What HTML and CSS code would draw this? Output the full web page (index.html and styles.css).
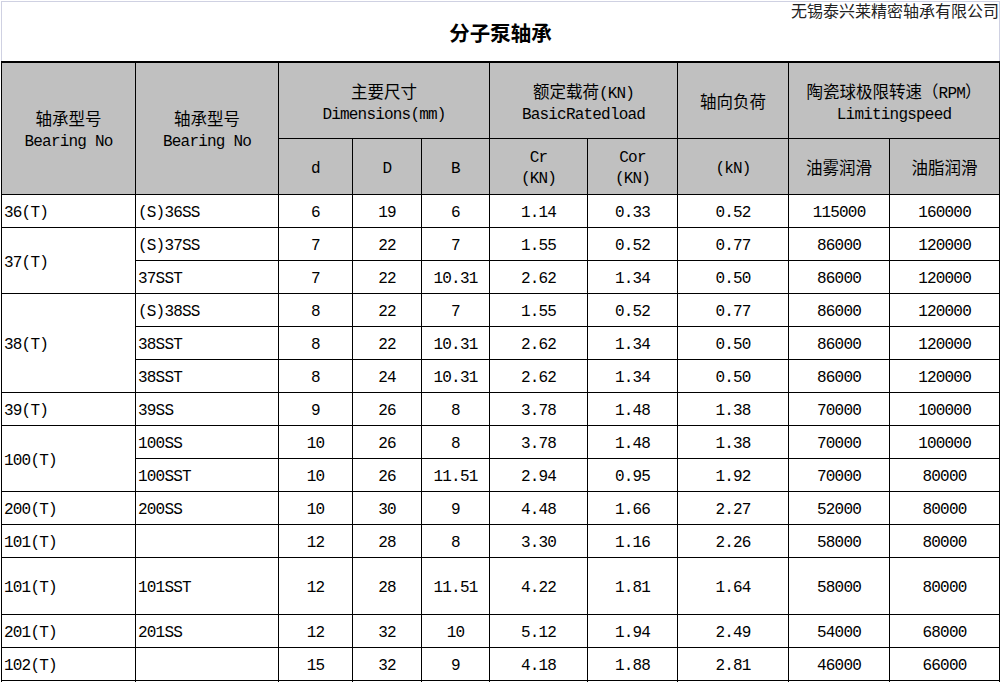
FILE: index.html
```html
<!DOCTYPE html>
<html lang="zh-CN">
<head>
<meta charset="utf-8">
<title>分子泵轴承</title>
<link rel="stylesheet" href="styles.css">
</head>
<body>
<div class="sheet">
  <div class="top">
    <div class="company">无锡泰兴莱精密轴承有限公司</div>
    <h1 class="title">分子泵轴承</h1>
  </div>
  <table class="grid">
    <colgroup>
      <col class="c1"><col class="c2"><col class="c3"><col class="c4"><col class="c5">
      <col class="c6"><col class="c7"><col class="c8"><col class="c9"><col class="c10">
    </colgroup>
    <thead>
      <tr class="h1">
        <th class="span2" rowspan="2"><span class="zh">轴承型号</span><br>Bearing No</th>
        <th class="span2" rowspan="2"><span class="zh">轴承型号</span><br>Bearing No</th>
        <th colspan="3"><span class="zh">主要尺寸</span><br>Dimensions(mm)</th>
        <th colspan="2"><span class="zh">额定载荷</span>(KN)<br>BasicRatedload</th>
        <th><span class="zh">轴向负荷</span></th>
        <th colspan="2"><span class="zh">陶瓷球极限转速（</span>RPM<span class="zh">）</span><br>Limitingspeed</th>
      </tr>
      <tr class="h2">
        <th>d</th>
        <th>D</th>
        <th>B</th>
        <th>Cr<br>(KN)</th>
        <th>Cor<br>(KN)</th>
        <th>(kN)</th>
        <th><span class="zh">油雾润滑</span></th>
        <th><span class="zh">油脂润滑</span></th>
      </tr>
    </thead>
    <tbody>
      <tr><td class="l">36(T)</td><td class="l">(S)36SS</td><td>6</td><td>19</td><td>6</td><td>1.14</td><td>0.33</td><td>0.52</td><td>115000</td><td>160000</td></tr>
      <tr><td class="l" rowspan="2">37(T)</td><td class="l">(S)37SS</td><td>7</td><td>22</td><td>7</td><td>1.55</td><td>0.52</td><td>0.77</td><td>86000</td><td>120000</td></tr>
      <tr><td class="l">37SST</td><td>7</td><td>22</td><td>10.31</td><td>2.62</td><td>1.34</td><td>0.50</td><td>86000</td><td>120000</td></tr>
      <tr><td class="l" rowspan="3">38(T)</td><td class="l">(S)38SS</td><td>8</td><td>22</td><td>7</td><td>1.55</td><td>0.52</td><td>0.77</td><td>86000</td><td>120000</td></tr>
      <tr><td class="l">38SST</td><td>8</td><td>22</td><td>10.31</td><td>2.62</td><td>1.34</td><td>0.50</td><td>86000</td><td>120000</td></tr>
      <tr><td class="l">38SST</td><td>8</td><td>24</td><td>10.31</td><td>2.62</td><td>1.34</td><td>0.50</td><td>86000</td><td>120000</td></tr>
      <tr><td class="l">39(T)</td><td class="l">39SS</td><td>9</td><td>26</td><td>8</td><td>3.78</td><td>1.48</td><td>1.38</td><td>70000</td><td>100000</td></tr>
      <tr><td class="l" rowspan="2">100(T)</td><td class="l">100SS</td><td>10</td><td>26</td><td>8</td><td>3.78</td><td>1.48</td><td>1.38</td><td>70000</td><td>100000</td></tr>
      <tr><td class="l">100SST</td><td>10</td><td>26</td><td>11.51</td><td>2.94</td><td>0.95</td><td>1.92</td><td>70000</td><td>80000</td></tr>
      <tr><td class="l">200(T)</td><td class="l">200SS</td><td>10</td><td>30</td><td>9</td><td>4.48</td><td>1.66</td><td>2.27</td><td>52000</td><td>80000</td></tr>
      <tr><td class="l">101(T)</td><td class="l"></td><td>12</td><td>28</td><td>8</td><td>3.30</td><td>1.16</td><td>2.26</td><td>58000</td><td>80000</td></tr>
      <tr class="tall"><td class="l">101(T)</td><td class="l">101SST</td><td>12</td><td>28</td><td>11.51</td><td>4.22</td><td>1.81</td><td>1.64</td><td>58000</td><td>80000</td></tr>
      <tr><td class="l">201(T)</td><td class="l">201SS</td><td>12</td><td>32</td><td>10</td><td>5.12</td><td>1.94</td><td>2.49</td><td>54000</td><td>68000</td></tr>
      <tr><td class="l">102(T)</td><td class="l"></td><td>15</td><td>32</td><td>9</td><td>4.18</td><td>1.88</td><td>2.81</td><td>46000</td><td>66000</td></tr>
      <tr><td class="l"></td><td class="l"></td><td></td><td></td><td></td><td></td><td></td><td></td><td></td><td></td></tr>
    </tbody>
  </table>
</div>
</body>
</html>
```

FILE: styles.css
```css
html, body {
  margin: 0;
  padding: 0;
  background: #ffffff;
}
body {
  overflow: hidden;
  color: #000000;
  font-family: "Liberation Mono", "Noto Sans CJK SC", monospace;
  font-size: 16px;
  letter-spacing: -0.8px;
}
.sheet {
  width: 1000px;
  padding-top: 1px;
}
.top {
  box-sizing: border-box;
  height: 60px;
  margin-left: 1px;
  border-top: 1px solid #cfd1e2;
  border-left: 1px solid #cfd1e2;
  border-right: 1px solid #cfd1e2;
}
.company {
  text-align: right;
  font-family: "Noto Sans CJK SC", sans-serif;
  font-size: 16px;
  line-height: 17px;
  letter-spacing: 0;
  color: #222222;
}
.title {
  margin: 0;
  text-align: center;
  font-family: "Noto Sans CJK SC", sans-serif;
  font-weight: 700;
  font-size: 20.5px;
  line-height: 26px;
  letter-spacing: 0;
  color: #000000;
}
.grid {
  border-collapse: collapse;
  table-layout: fixed;
  width: 999px;
  margin-left: 1px;
}
.c1 { width: 134px; }
.c2 { width: 143px; }
.c3 { width: 74px; }
.c4 { width: 69px; }
.c5 { width: 68px; }
.c6 { width: 98px; }
.c7 { width: 90px; }
.c8 { width: 111px; }
.c9 { width: 101px; }
.c10 { width: 110px; }
.grid th,
.grid td {
  border: 1px solid #000000;
  text-align: center;
  vertical-align: middle;
  white-space: nowrap;
  overflow: hidden;
}
.grid th {
  background: #c0c0c0;
  font-weight: 400;
  line-height: 21px;
  padding: 6px 3px 0;
}
.grid th.span2 {
  padding-top: 4px;
}
.grid thead tr.h1 th {
  border-top: 2px solid #000000;
}
.grid tr.h1 { height: 76px; }
.grid tr.h2 { height: 56px; }
.grid tbody tr { height: 33px; }
.grid tbody tr.tall { height: 57px; }
.grid td {
  line-height: 18px;
  padding: 5px 3px 0;
}
.grid td.l {
  text-align: left;
  padding-left: 2px;
}
.zh {
  font-family: "Noto Sans CJK SC", sans-serif;
  font-size: 16.5px;
  letter-spacing: 0;
}
```
